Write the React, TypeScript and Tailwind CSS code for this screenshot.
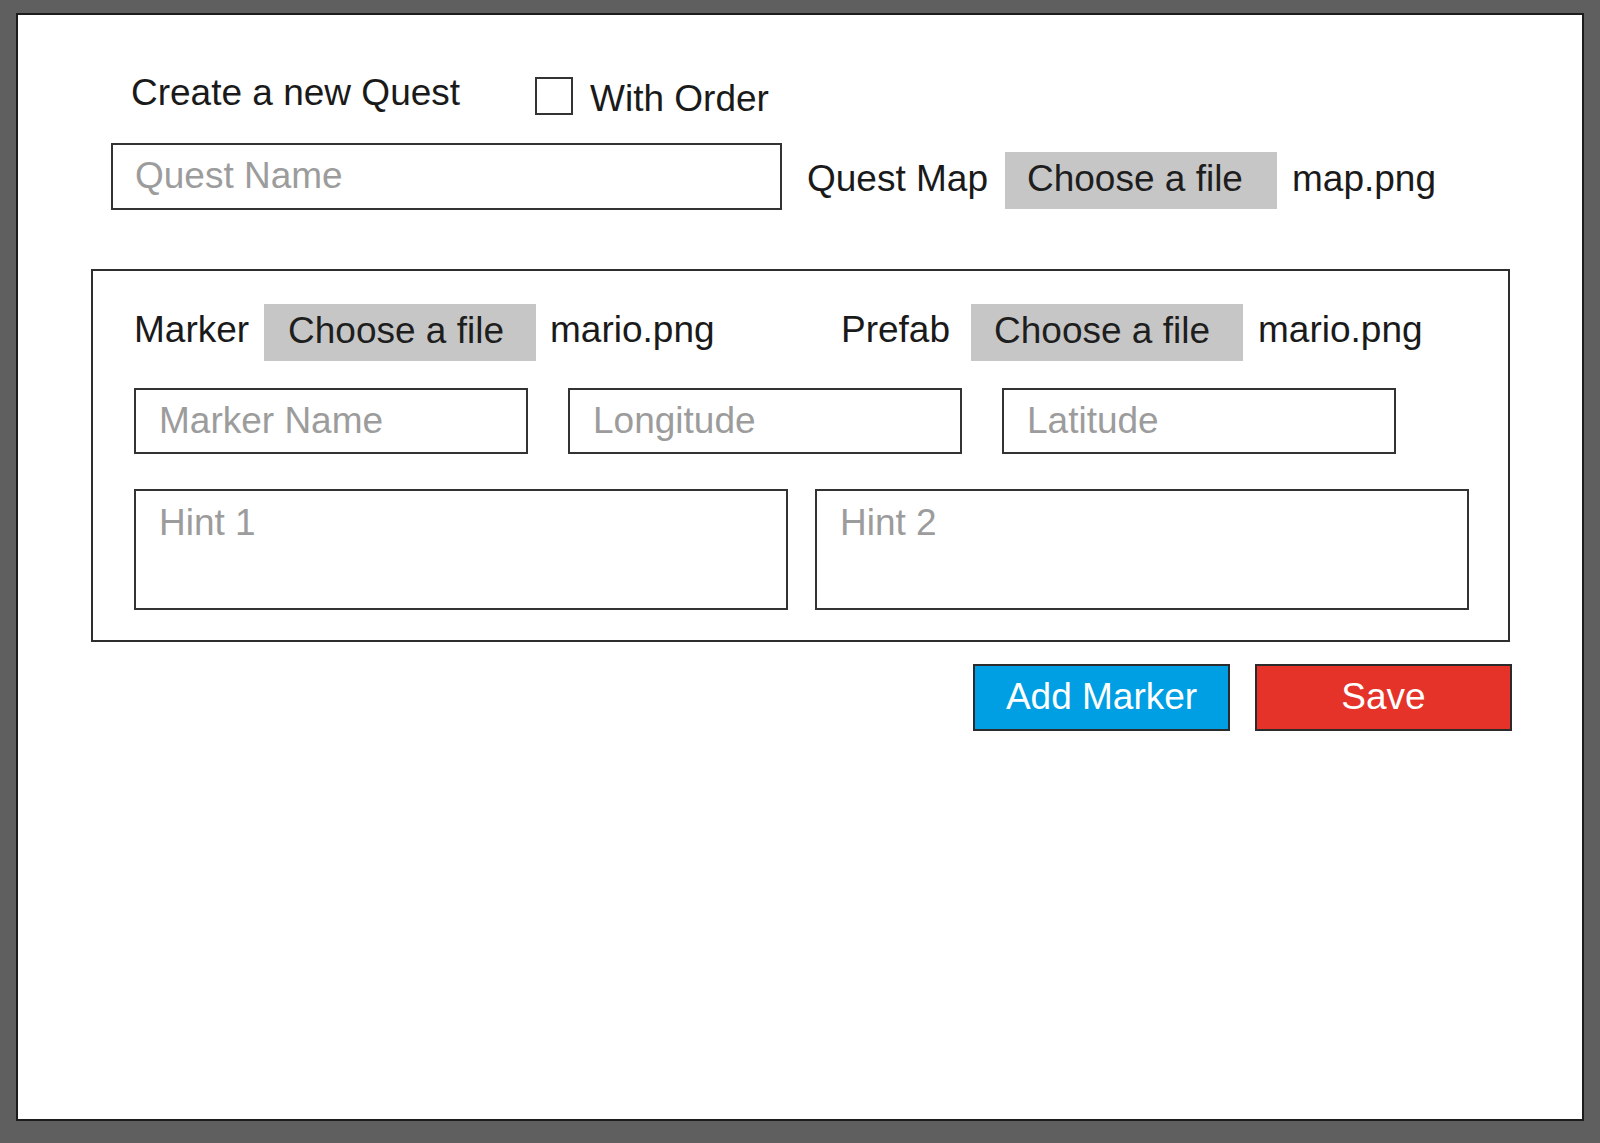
import { useState } from "react";

const font = "font-['Liberation_Sans',Arial,sans-serif]";

const FileButton = ({ className = "" }: { className?: string }) => (
  <label
    className={`flex h-[57px] w-[272px] cursor-pointer items-center bg-[#c6c6c6] pb-[4px] leading-none text-[#1e1e1e] ${className}`}
  >
    Choose a file
    <input type="file" className="hidden" />
  </label>
);

const App = () => {
  const [withOrder, setWithOrder] = useState(false);

  return (
    <div
      className={`h-[1143px] w-full bg-[#5f5f5f] px-4 pt-[13px] text-[37px] text-[#1a1a1a] ${font}`}
    >
      <div className="h-[1108px] border-2 border-[#1c1c1c] bg-white">
        <div className="ml-[113px] flex items-start pt-[59px]">
          <span className="w-[404px] leading-none">Create a new Quest</span>
          <input
            type="checkbox"
            checked={withOrder}
            onChange={() => setWithOrder(!withOrder)}
            className="mt-[3px] h-[38px] w-[38px] appearance-none border-2 border-[#333] bg-white checked:bg-[#c6c6c6]"
          />
          <span className="ml-[17px] mt-[6px] leading-none">With Order</span>
        </div>

        <div className="ml-[93px] mt-[26px] flex items-start">
          <input
            placeholder="Quest Name"
            className="h-[67px] w-[671px] border-2 border-[#333] pb-[2px] pl-[22px] leading-none outline-none placeholder:text-[#9c9c9c]"
          />
          <span className="ml-[25px] mt-[17px] leading-none">Quest Map</span>
          <FileButton className="ml-[17px] mt-[9px] pl-[22px]" />
          <span className="ml-[15px] mt-[17px] leading-none">map.png</span>
        </div>

        <section className="ml-[73px] mt-[59px] h-[373px] w-[1419px] border-2 border-[#2e2e2e] pl-[41px] pt-[33px]">
          <div className="flex items-start">
            <div className="flex w-[707px] items-start">
              <span className="mt-[7px] w-[130px] leading-none">Marker</span>
              <FileButton className="pl-[24px]" />
              <span className="ml-[14px] mt-[7px] leading-none">mario.png</span>
            </div>
            <div className="flex items-start">
              <span className="mt-[7px] w-[130px] leading-none">Prefab</span>
              <FileButton className="pl-[23px]" />
              <span className="ml-[15px] mt-[7px] leading-none">mario.png</span>
            </div>
          </div>

          <div className="mt-[27px] flex gap-[40px]">
            {["Marker Name", "Longitude", "Latitude"].map((p) => (
              <input
                key={p}
                placeholder={p}
                className="h-[66px] w-[394px] border-2 border-[#333] pl-[23px] leading-none outline-none placeholder:text-[#9c9c9c]"
              />
            ))}
          </div>

          <div className="mt-[35px] flex gap-[27px]">
            {["Hint 1", "Hint 2"].map((p) => (
              <textarea
                key={p}
                placeholder={p}
                className="h-[121px] w-[654px] resize-none border-2 border-[#333] pl-[23px] pt-[13px] leading-none outline-none placeholder:text-[#9c9c9c]"
              />
            ))}
          </div>
        </section>

        <div className="ml-[955px] mt-[22px] flex gap-[25px]">
          <button className="h-[67px] w-[257px] border-2 border-[#2b2b2b] bg-[#009fe3] pb-[2px] leading-none text-white">
            Add Marker
          </button>
          <button className="h-[67px] w-[257px] border-2 border-[#2b2b2b] bg-[#e5332a] pb-[2px] leading-none text-white">
            Save
          </button>
        </div>
      </div>
    </div>
  );
};

export default App;
